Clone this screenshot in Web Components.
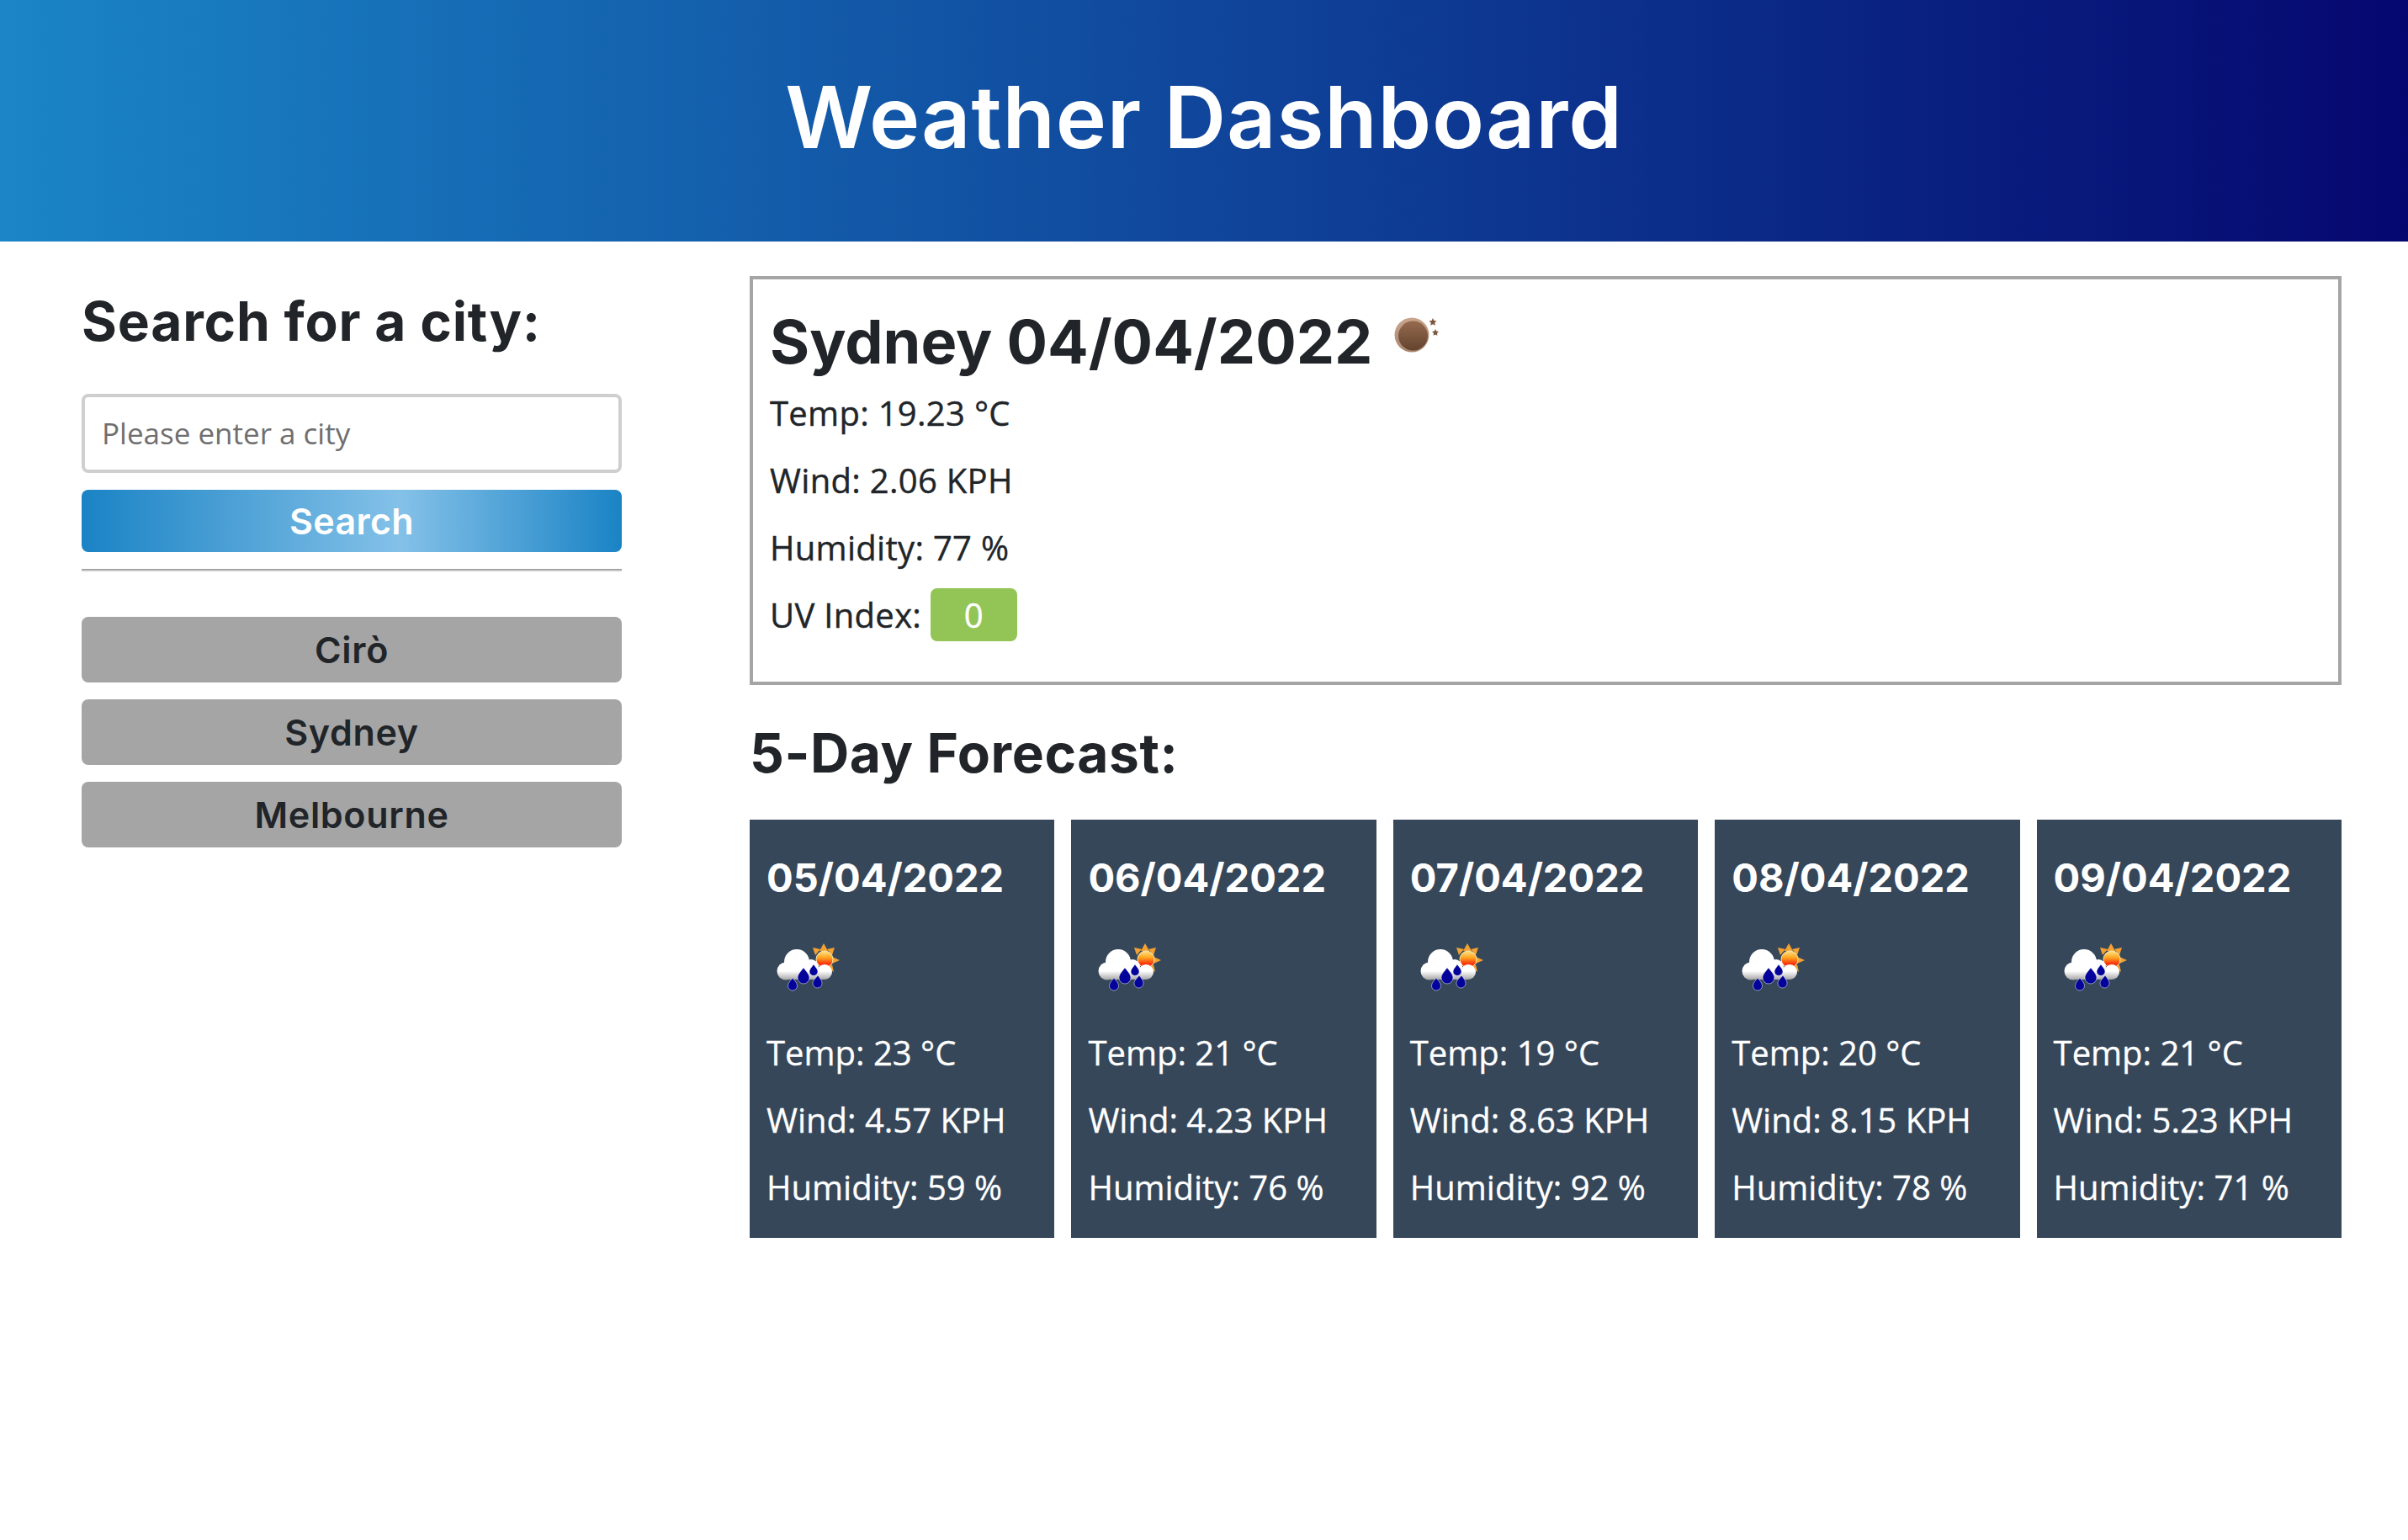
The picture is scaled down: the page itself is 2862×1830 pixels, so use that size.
<!DOCTYPE html>
<html>
<head>
<meta charset="utf-8">
<title>Weather Dashboard</title>
<style>
  html, body { margin: 0; background: #fff; }
  body { font-family: "Open Sans", sans-serif; color: #212529; }
  .page { display: grid; grid-template-columns: 642px 1892px; column-gap: 152px; padding: 41px 79px 0 97px; }
</style>
</head>
<body>
<weather-header>Weather Dashboard</weather-header>
<div class="page">
  <search-panel>
    <city-button>Cirò</city-button>
    <city-button>Sydney</city-button>
    <city-button>Melbourne</city-button>
  </search-panel>
  <main>
    <current-weather city="Sydney 04/04/2022" temp="Temp: 19.23 °C" wind="Wind: 2.06 KPH" humidity="Humidity: 77 %" uv="0"></current-weather>
    <forecast-row heading="5-Day Forecast:">
      <forecast-card date="05/04/2022" temp="Temp: 23 °C" wind="Wind: 4.57 KPH" humidity="Humidity: 59 %"></forecast-card>
      <forecast-card date="06/04/2022" temp="Temp: 21 °C" wind="Wind: 4.23 KPH" humidity="Humidity: 76 %"></forecast-card>
      <forecast-card date="07/04/2022" temp="Temp: 19 °C" wind="Wind: 8.63 KPH" humidity="Humidity: 92 %"></forecast-card>
      <forecast-card date="08/04/2022" temp="Temp: 20 °C" wind="Wind: 8.15 KPH" humidity="Humidity: 78 %"></forecast-card>
      <forecast-card date="09/04/2022" temp="Temp: 21 °C" wind="Wind: 5.23 KPH" humidity="Humidity: 71 %"></forecast-card>
    </forecast-row>
  </main>
</div>

<script>
const HEAD_FONT = '"Inter", "Liberation Sans", sans-serif';

class WeatherHeader extends HTMLElement {
  constructor() {
    super();
    this.attachShadow({ mode: 'open' }).innerHTML = `
      <style>
        :host { display: flex; align-items: center; justify-content: center; box-sizing: border-box; height: 287px;
          padding-bottom: 10px; background: linear-gradient(90deg, #1a85c7 0%, #05076f 100%); }
        h1 { margin: 0; color: #fff; font: 600 102px ${HEAD_FONT}; letter-spacing: 0.8px; }
      </style>
      <h1><slot></slot></h1>`;
  }
}
customElements.define('weather-header', WeatherHeader);

class CityButton extends HTMLElement {
  constructor() {
    super();
    this.attachShadow({ mode: 'open' }).innerHTML = `
      <style>
        :host { display: flex; align-items: center; justify-content: center; height: 78px;
          background: #a5a5a5; border-radius: 8px; color: #212529;
          font: 600 43px ${HEAD_FONT}; letter-spacing: 0.7px; }
      </style>
      <slot></slot>`;
  }
}
customElements.define('city-button', CityButton);

class SearchPanel extends HTMLElement {
  constructor() {
    super();
    this.attachShadow({ mode: 'open' }).innerHTML = `
      <style>
        :host { display: block; padding-top: 16px; }
        h2 { margin: 0 0 47px; font: 700 64px/1.2 ${HEAD_FONT}; letter-spacing: 0.8px; color: #212529; }
        input { display: block; box-sizing: border-box; width: 100%; height: 94px; padding: 0 20px;
          border: 4px solid #cfcfcf; border-radius: 8px; background: #fff; outline: none;
          font: 35px "Open Sans", sans-serif; color: #212529; }
        input::placeholder { color: #6f6f6f; opacity: 1; }
        .search { display: flex; align-items: center; justify-content: center; height: 74px; margin-top: 20px;
          border-radius: 8px; color: #fff; font: 600 43px ${HEAD_FONT}; letter-spacing: 0.3px;
          background: linear-gradient(90deg, #1a83c5 0%, #84c1e8 59%, #1a83c5 100%); }
        hr { height: 4px; margin: 20px 0 53px; border: 0; background: linear-gradient(#a5a5a5 50%, #eee 50%); }
        .cities { display: flex; flex-direction: column; gap: 20px; }
      </style>
      <h2>Search for a city:</h2>
      <input type="text" placeholder="Please enter a city">
      <div class="search">Search</div>
      <hr>
      <div class="cities"><slot></slot></div>`;
  }
}
customElements.define('search-panel', SearchPanel);

class MoonIcon extends HTMLElement {
  constructor() {
    super();
    this.attachShadow({ mode: 'open' }).innerHTML = `
      <style>:host { display: inline-block; width: 60px; height: 46px; } svg { display: block; filter: blur(0.5px); }</style>
      <svg width="60" height="46" viewBox="0 0 60 46">
        <defs>
          <linearGradient id="m" x1="0" y1="0" x2="0" y2="1">
            <stop offset="0" stop-color="#966a4f"/><stop offset="1" stop-color="#63432e"/>
          </linearGradient>
          <linearGradient id="r" x1="0" y1="0" x2="0" y2="1">
            <stop offset="0" stop-color="#c9a58d"/><stop offset="1" stop-color="#a8876f"/>
          </linearGradient>
        </defs>
        <circle cx="21" cy="21" r="20.5" fill="url(#r)"/>
        <circle cx="22.5" cy="22" r="17.5" fill="url(#m)"/>
        <polygon points="46,1 47.4,4 50.6,4.4 48.2,6.6 48.8,9.8 46,8.2 43.2,9.8 43.8,6.6 41.4,4.4 44.6,4" fill="#7d5640"/>
        <polygon points="49,14 50.2,16.6 53,17 51,19 51.4,21.8 49,20.4 46.6,21.8 47,19 45,17 47.8,16.6" fill="#7d5640"/>
      </svg>`;
  }
}
customElements.define('moon-icon', MoonIcon);

class RainIcon extends HTMLElement {
  constructor() {
    super();
    this.attachShadow({ mode: 'open' }).innerHTML = `
      <style>:host { display: block; width: 80px; height: 60px; } svg { display: block; filter: blur(0.5px); }</style>
      <svg width="80" height="60" viewBox="0 0 80 60">
        <defs>
          <linearGradient id="s" x1="0" y1="0" x2="0" y2="1">
            <stop offset="0" stop-color="#ffe38a"/><stop offset="0.4" stop-color="#ffa51e"/><stop offset="0.75" stop-color="#f8360f"/><stop offset="1" stop-color="#f8300f"/>
          </linearGradient>
          <linearGradient id="c" gradientUnits="userSpaceOnUse" x1="0" y1="7" x2="0" y2="43">
            <stop offset="0" stop-color="#ffffff"/><stop offset="0.72" stop-color="#ffffff"/><stop offset="1" stop-color="#a9a9a9"/>
          </linearGradient>
        </defs>
        <g fill="#f3a232">
          <polygon points="59,0 64,9 54,9"/>
          <polygon points="46,5 55,7 49,14"/>
          <polygon points="72,5 69,14 63,7"/>
          <polygon points="78,20 69,24 69,16"/>
          <polygon points="71,34 64,29 69,25"/>
        </g>
        <circle cx="60" cy="19" r="10" fill="url(#s)" stroke="#ffe9a8" stroke-width="1"/>
        <g fill="url(#c)">
          <circle cx="27" cy="22" r="15"/>
          <circle cx="14" cy="33" r="10.5"/>
          <circle cx="44" cy="28" r="9"/>
          <circle cx="60" cy="34" r="9"/>
          <rect x="14" y="30" width="46" height="13"/>
        </g>
        <g fill="#03039c" stroke="#fff" stroke-opacity="0.5" stroke-width="1">
          <path d="M47 25 C50 29 52 31 52 33.5 A5 5 0 0 1 42 33.5 C42 31 44 29 47 25 Z"/>
          <path d="M35 29 C39 34 42 37 42 41 A7 7 0 0 1 28 41 C28 37 31 34 35 29 Z"/>
          <path d="M52 38 C55 42 57 44 57 47.5 A5.5 5.5 0 0 1 46 47.5 C46 44 49 42 52 38 Z"/>
          <path d="M22 41 C25 45 27.5 47 27.5 50.5 A5.5 5.5 0 0 1 16.5 50.5 C16.5 47 19 45 22 41 Z"/>
        </g>
      </svg>`;
  }
}
customElements.define('rain-icon', RainIcon);

class CurrentWeather extends HTMLElement {
  constructor() {
    super();
    const a = n => this.getAttribute(n);
    this.attachShadow({ mode: 'open' }).innerHTML = `
      <style>
        :host { display: block; box-sizing: border-box; height: 486px; padding: 29px 20px 0;
          border: 4px solid #a5a5a5; }
        h2 { display: flex; align-items: flex-start; margin: 0; font: 700 72px/90px ${HEAD_FONT}; color: #212529; }
        moon-icon { margin: 16px 0 0 26px; }
        p { margin: 0; height: 80px; line-height: 80px; font-size: 40px; color: #212529; white-space: nowrap;
          letter-spacing: 0.3px; -webkit-text-stroke: 0.4px currentColor; }
        .uv { display: inline-block; width: 103px; height: 63px; margin-left: 0; border-radius: 8px;
          background: #92c556; color: #fff; line-height: 63px; text-align: center; }
      </style>
      <h2>${a('city')}<moon-icon></moon-icon></h2>
      <p>${a('temp')}</p>
      <p>${a('wind')}</p>
      <p>${a('humidity')}</p>
      <p>UV Index: <span class="uv">${a('uv')}</span></p>`;
  }
}
customElements.define('current-weather', CurrentWeather);

class ForecastCard extends HTMLElement {
  constructor() {
    super();
    const a = n => this.getAttribute(n);
    this.attachShadow({ mode: 'open' }).innerHTML = `
      <style>
        :host { display: block; box-sizing: border-box; height: 497px; padding: 38px 20px 0;
          background: #36475a; color: #fff; }
        h3 { margin: 0; font: 700 47px/62px ${HEAD_FONT}; color: #fff; white-space: nowrap; }
        rain-icon { margin: 47px 0 30px 9px; }
        p { margin: 0; height: 80px; line-height: 80px; font-size: 40px; white-space: nowrap; -webkit-text-stroke: 0.3px currentColor; }
      </style>
      <h3>${a('date')}</h3>
      <rain-icon></rain-icon>
      <p>${a('temp')}</p>
      <p>${a('wind')}</p>
      <p>${a('humidity')}</p>`;
  }
}
customElements.define('forecast-card', ForecastCard);

class ForecastRow extends HTMLElement {
  constructor() {
    super();
    this.attachShadow({ mode: 'open' }).innerHTML = `
      <style>
        :host { display: block; }
        h2 { margin: 0; padding: 43px 0 40px; font: 700 64px/1.2 ${HEAD_FONT}; letter-spacing: 0.6px; color: #212529; }
        .cards { display: grid; grid-template-columns: repeat(5, 1fr); gap: 20px; }
      </style>
      <h2>${this.getAttribute('heading')}</h2>
      <div class="cards"><slot></slot></div>`;
  }
}
customElements.define('forecast-row', ForecastRow);
</script>
</body>
</html>
